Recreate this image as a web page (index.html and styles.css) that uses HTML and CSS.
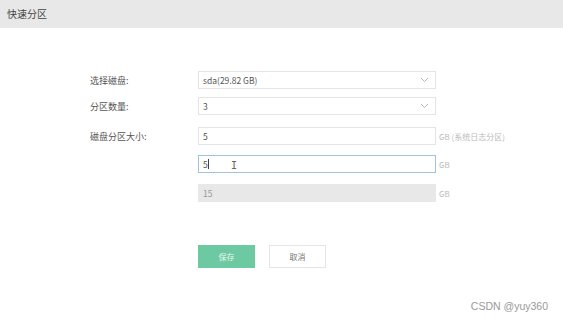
FILE: index.html
```html
<!DOCTYPE html>
<html>
  <head>
    <meta charset="utf-8">
    <title>快速分区</title>
    <link rel="stylesheet" href="styles.css">
  </head>
  <body>
    <header class="bar">快速分区</header>
    <form class="form">
      <div class="row">
        <label>选择磁盘:</label>
        <div class="field select"><span>sda(29.82 GB)</span>
          <svg width="9" height="6" viewBox="0 0 9 6"><path d="M1 1l3.5 3.5L8 1" fill="none" stroke="#b8b8b8" stroke-width="1"/></svg>
        </div>
      </div>
      <div class="row">
        <label>分区数量:</label>
        <div class="field select"><span>3</span>
          <svg width="9" height="6" viewBox="0 0 9 6"><path d="M1 1l3.5 3.5L8 1" fill="none" stroke="#b8b8b8" stroke-width="1"/></svg>
        </div>
      </div>
      <div class="row">
        <label>磁盘分区大小:</label>
        <div class="field">5</div>
        <span class="unit">GB (系统日志分区)</span>
      </div>
      <div class="row">
        <label></label>
        <div class="field focus">5<i class="caret"></i><span class="ibeam">I</span></div>
        <span class="unit">GB</span>
      </div>
      <div class="row">
        <label></label>
        <div class="field off">15</div>
        <span class="unit">GB</span>
      </div>
      <div class="actions">
        <button type="button" class="btn save">保存</button>
        <button type="button" class="btn">取消</button>
      </div>
    </form>
    <footer class="mark">CSDN @yuy360</footer>
  </body>
</html>
```

FILE: styles.css
```css
* {
  box-sizing: border-box;
  font-family: "Noto Sans CJK SC", "Open Sans", sans-serif;
}
body {
  margin: 0;
  width: 563px;
  height: 322px;
  background: #fff;
  position: relative;
  overflow: hidden;
}
.bar {
  height: 28px;
  line-height: 28px;
  padding-left: 7px;
  background: #e8e8e8;
  color: #444;
  font-size: 10px;
}
.form {
  padding: 43px 0 0 90px;
}
.row {
  display: flex;
  align-items: center;
  height: 18px;
  margin-bottom: 10px;
}
.row:nth-child(1) { margin-bottom: 8px; }
.row:nth-child(2) { margin-bottom: 12px; }
.row:nth-child(5) { margin-bottom: 0; }
.row label {
  width: 108px;
  font-size: 9px;
  color: #555;
}
.field {
  position: relative;
  display: flex;
  align-items: center;
  justify-content: space-between;
  width: 238px;
  height: 18px;
  padding: 0 6px 0 4px;
  border: 1px solid #e4e4e4;
  font-size: 8.5px;
  color: #555;
}
.focus {
  justify-content: flex-start;
  border-color: #9ec3da;
}
.off {
  background: #e8e8e8;
  border-color: #e8e8e8;
  color: #999;
  margin-top: 2px;
}
.caret {
  display: inline-block;
  width: 1px;
  height: 10px;
  background: #444;
}
.ibeam {
  position: absolute;
  left: 32px;
  top: 4px;
  font-size: 10px;
  color: #666;
  font-family: "DejaVu Sans Mono", monospace;
}
.unit {
  margin-left: 3px;
  font-size: 8px;
  color: #bbb;
}
.off + .unit { margin-top: 2px; }
.actions {
  display: flex;
  gap: 14px;
  margin: 44px 0 0 108px;
}
.btn {
  width: 57px;
  height: 23px;
  border: 1px solid #e4e4e4;
  background: #fff;
  font-size: 8px;
  color: #777;
}
.save {
  background: #6cc9a1;
  border-color: #6cc9a1;
  color: #e8f7f0;
}
.mark {
  position: absolute;
  right: 15px;
  bottom: 10px;
  font-size: 10.5px;
  color: #999;
  font-family: "Liberation Sans", sans-serif;
}
```
